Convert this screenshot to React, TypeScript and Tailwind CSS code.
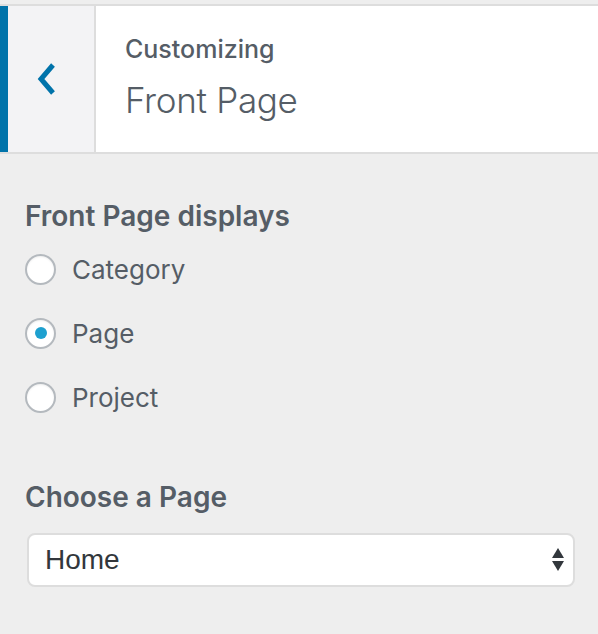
import React from "react";

const options = ["Category", "Page", "Project"];

function Radio({ checked }: { checked: boolean }) {
  return (
    <span className="w-[31px] h-[31px] rounded-full border-2 border-[#b4b9be] bg-white flex items-center justify-center shrink-0 shadow-[inset_0_1px_2px_rgba(0,0,0,0.07)]">
      {checked && <span className="w-[12px] h-[12px] rounded-full bg-[#1ea0cf]" />}
    </span>
  );
}

export default function App() {
  return (
    <div
      className="w-[598px] h-[634px] bg-[#eeeeee] overflow-hidden"
      style={{ fontFamily: "Inter, 'Noto Sans', sans-serif" }}
    >
      {/* Header */}
      <div className="mt-[4px] h-[150px] flex bg-white border-y-2 border-[#dddddd]">
        <div className="w-[8px] bg-[#0073aa]" />
        <div className="w-[88px] bg-[#f3f3f5] border-r-2 border-[#dddddd] flex items-start">
          <svg width="24" height="36" viewBox="0 0 24 36" className="ml-[26px] mt-[55px]">
            <polyline
              points="19,4 7,18 19,32"
              fill="none"
              stroke="#0073aa"
              strokeWidth="5"
              strokeLinecap="butt"
              strokeLinejoin="miter"
            />
          </svg>
        </div>
        <div className="pl-[29px] pt-[31px]">
          <div className="text-[25px] leading-[25px] font-medium text-[#555d66]">Customizing</div>
          <div className="mt-[18px] text-[35px] leading-[40px] font-light text-[#555d66] tracking-[-0.3px]">
            Front Page
          </div>
        </div>
      </div>

      {/* Body */}
      <div className="pl-[25px] pr-[23px] pt-[46px]">
        <div className="text-[28px] leading-[32px] font-semibold text-[#555d66]">Front Page displays</div>
        <div className="mt-[5px]">
          {options.map((o) => (
            <div key={o} className="h-[64px] flex items-center">
              <Radio checked={o === "Page"} />
              <span className="ml-[16px] text-[26px] text-[#555d66]">{o}</span>
            </div>
          ))}
        </div>

        <div className="mt-[52px] text-[28px] leading-[32px] font-semibold text-[#555d66]">Choose a Page</div>
        <div className="mt-[20px] ml-[2px] h-[54px] bg-white border-2 border-[#dddddd] rounded-[8px] flex items-center justify-between pl-[16px] pr-[8px]">
          <span
            className="text-[28px] text-[#32373c]"
            style={{ fontFamily: "'Liberation Sans', Arial, sans-serif" }}
          >
            Home
          </span>
          <svg width="14" height="26" viewBox="0 0 14 26">
            <polygon points="7,1 13,11 1,11" fill="#32373c" />
            <polygon points="1,14 13,14 7,24" fill="#32373c" />
          </svg>
        </div>
      </div>
    </div>
  );
}
